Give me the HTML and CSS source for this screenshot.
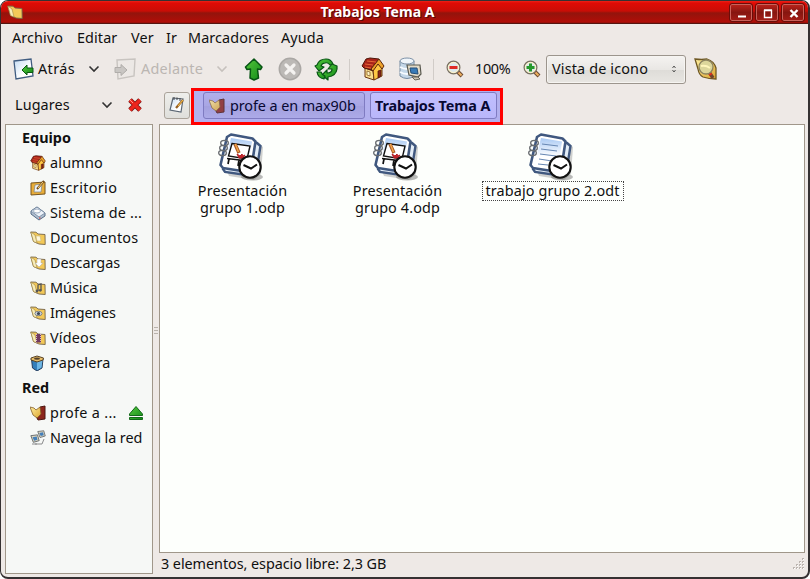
FILE: index.html
```html
<!DOCTYPE html>
<html lang="es">
<head>
<meta charset="utf-8">
<title>Trabajos Tema A</title>
<link rel="stylesheet" href="styles.css">
</head>
<body>
<svg class="defs" width="0" height="0">
  <defs>
    <linearGradient id="gold" x1="0" y1="0" x2="1" y2="1"><stop offset="0" stop-color="#fff0a0"/><stop offset="1" stop-color="#dda42e"/></linearGradient>
    <linearGradient id="green" x1="0" y1="0" x2="1" y2="1"><stop offset="0" stop-color="#55c83c"/><stop offset="1" stop-color="#118a18"/></linearGradient>
    <linearGradient id="paper" x1="0" y1="0" x2="1" y2="1"><stop offset="0" stop-color="#c3daf2"/><stop offset=".6" stop-color="#fff"/></linearGradient>
    <linearGradient id="sheet" x1="0" y1="0" x2="0" y2="1"><stop offset="0" stop-color="#a9c9f3"/><stop offset=".6" stop-color="#fff"/></linearGradient>
    <symbol id="folder" viewBox="0 0 16 16">
      <path d="M.8 2 6 2.2 8 4 15 4.5 15.2 14.5 9 14 3.5 11.5Z" fill="#f3c958" stroke="#756448" stroke-width=".9"/>
      <path d="M.8 2 3.5 11.5 7 13 5 5Z" fill="#f8edb8" stroke="#a08540" stroke-width=".6"/>
    </symbol>
    <symbol id="house" viewBox="0 0 24 24">
      <path d="M4 11 12 14 13 23 4 20Z" fill="#f7dc8c" stroke="#6b3512"/>
      <path d="M12 12 17 6 21 11 21 19 13 23Z" fill="#ffc744" stroke="#6b3512"/>
      <path d="M1 9 5 2 9 1 18 2 11 13 3 11Z" fill="#a92319" stroke="#4e1508"/>
      <path d="M18 2 23 9 21 12 17 7 12 14 10 12Z" fill="#eda22b" stroke="#5b260c"/>
      <path d="M4 7 12 8M6 4 15 5M4 10 10 11" stroke="#e56637"/>
      <path d="M17 14 20 13 20 19 17 21Z" fill="#8b251a" stroke="#481109" stroke-width=".7"/>
      <path d="M6 14 9 15V19L6 18Z" fill="#fff5c4" stroke="#81501b" stroke-width=".7"/>
    </symbol>
    <symbol id="chevron" viewBox="0 0 12 8"><path d="M1.5 1.5 6 6 10.5 1.5" fill="none" stroke="currentColor" stroke-width="1.6"/></symbol>
    <symbol id="lens" viewBox="0 0 18 18">
      <path d="M11 11 16 16" stroke="#6a4930" stroke-width="4"/><path d="M11 11 15.5 15.5" stroke="#efb261" stroke-width="2"/><path d="M11 11 12.5 12.5" stroke="#df3420" stroke-width="2"/>
      <circle cx="7.5" cy="7.5" r="6.4" fill="#e9e7d0" stroke="#776f60" stroke-width="1.2"/>
      <circle cx="7.5" cy="7.5" r="5" fill="#dce9ee" stroke="#fff4c8"/>
    </symbol>
    <symbol id="notebook" viewBox="0 0 48 48">
      <path d="M10 38 12 43 37 47 44 41 46 14 42 11Z" fill="#777" opacity=".35"/>
      <path d="M15 6 40 10 43.5 13 39 41 36 43 8 39 6 36Z" fill="#e3edf7" stroke="#40587f" stroke-width="2.4"/>
      <path d="M14 1.5 35.5 5.5 38.5 8.5 34 37 31 39 6 35 3.5 32 10 4Z" fill="#fff" stroke="#40587f" stroke-width="2.6" stroke-linejoin="round"/>
      <path d="M14 5 35 8.5 31 35.5 7.5 31.5Z" fill="url(#sheet)"/>
      <g fill="none" stroke="#686c70" stroke-width="1.4"><ellipse cx="7.5" cy="10" rx="3.8" ry="2.6"/><ellipse cx="6.5" cy="15" rx="3.8" ry="2.6"/><ellipse cx="5.5" cy="20" rx="3.8" ry="2.6"/></g>
    </symbol>
    <symbol id="clock" viewBox="0 0 48 48">
      <ellipse cx="35" cy="44" rx="11" ry="3.5" fill="#555" opacity=".4"/>
      <circle cx="33" cy="34" r="10.7" fill="#fff" stroke="#111" stroke-width="2.1"/>
      <path d="M26.5 32 34 35.5 40 31.5" fill="none" stroke="#111" stroke-width="2"/>
    </symbol>
    <symbol id="presentation" viewBox="0 0 48 48">
      <use href="#notebook"/>
      <path d="M10 25.5 31 28M12 26 11 31M22 27 21 33" stroke="#111" stroke-width="1.7"/>
      <path d="M15 10.5 33 13 30 26 11.5 23Z" fill="#fff" stroke="#111" stroke-width="1.4"/>
      <path d="M18 11 22 20" stroke="#a85824" stroke-width="3.4"/><path d="M18.3 11 21.5 19" stroke="#f2a64c" stroke-width="1.5"/>
      <path d="M20 21 23 23 25 21 26 23 28 22 26 25 22 25Z" fill="#c1272d" stroke="#b51c25"/>
      <use href="#clock"/>
    </symbol>
    <symbol id="remote" viewBox="0 0 16 16"><path d="M10 2 15 1V14L8 15 6 11 10 10Z" fill="#8d261c" stroke="#4c1711"/><path d="M0 2 4 3 6 5 10 2 11 9 7 13 3 10Z" fill="url(#gold)" stroke="#866028" stroke-width=".8"/></symbol>
    <symbol id="screen" viewBox="0 0 12 12"><path d="M1 2 9 1 11 8 4 10Z" fill="#ddd6bf" stroke="#545b60"/><path d="M3 4 8 3 9 7 5 8Z" fill="#437fba"/></symbol>
  </defs>
</svg>
<div class="window">
  <header class="titlebar">
    <svg class="app-icon" width="16" height="16"><use href="#folder"/></svg>
    <h1 class="title">Trabajos Tema A</h1>
    <div class="controls">
      <span class="control"><svg width="22" height="17"><path d="M7 11.5H15" stroke="#fff" stroke-width="2"/></svg></span>
      <span class="control"><svg width="22" height="17"><path d="M7.5 5.5H14.5V12.5H7.5ZM7 5H15" fill="none" stroke="#fff" stroke-width="1.4"/></svg></span>
      <span class="control"><svg width="22" height="17"><path d="M7.5 5 14.5 12M14.5 5 7.5 12" stroke="#fff" stroke-width="2.4"/></svg></span>
    </div>
  </header>
  <nav class="menu"><span>Archivo</span><span>Editar</span><span>Ver</span><span>Ir</span><span>Marcadores</span><span>Ayuda</span></nav>
  <div class="toolbar">
    <svg width="22" height="22" viewBox="0 0 22 22"><path d="M1 3 18 1 20 18 3 21Z" fill="url(#paper)" stroke="#405c80" stroke-width="1.3"/><path d="M9 12 14 7V10H20V14.5H14V17Z" fill="url(#green)" stroke="#0b5915"/></svg>
    <span class="back">Atrás</span>
    <svg class="arrow" width="12" height="8"><use href="#chevron"/></svg>
    <svg width="23" height="22" viewBox="0 0 23 22"><path d="M3 2 21 1 20 18 4 21Z" fill="#ece8e5" stroke="#c8c4c0" stroke-width="1.4"/><path d="M13 12 7 6.5V9.5H1V14.5H7V17.5Z" fill="#c9c6c3" stroke="#b0adaa"/></svg>
    <span class="forward">Adelante</span>
    <svg class="muted" width="12" height="8"><use href="#chevron"/></svg>
    <svg width="24" height="24"><path d="M12 2 20 10 18.5 12.5 15.5 12 16.5 21 12 23 8 21 8.5 12 5 12.5 3.5 10Z" fill="url(#green)" stroke="#075414" stroke-width="1.5" stroke-linejoin="round"/></svg>
    <svg width="24" height="24"><circle cx="12" cy="12" r="10.7" fill="#bcb9b6" stroke="#aaa7a4" stroke-width="1.5"/><path d="M8 8 16 16M16 8 8 16" stroke="#f4f2f0" stroke-width="3.2" stroke-linecap="round"/></svg>
    <svg width="24" height="24"><g fill="url(#green)" stroke="#075414" stroke-width="1.2" stroke-linejoin="round"><path d="M3 8Q5 2 12 2Q17 2 19 7L16 8Q14 5 11 6Q8 6 7 9L10 10 5 14 1 9Z"/><path d="M23 12Q22 19 14 20V23L8 18 13 13V16Q18 16 18 12L14 12 18 7 23 9Z"/><path d="M3 15H7Q8 18 11 19L10 22Q4 21 3 15Z"/></g></svg>
    <i class="separator"></i>
    <svg width="24" height="24"><use href="#house"/></svg>
    <svg width="24" height="24"><path d="M2 4V19Q9 24 16 19V4" fill="#c4d7e8" stroke="#7389a0"/><ellipse cx="9" cy="4" rx="7" ry="3" fill="#f0f5fa" stroke="#7d92a8"/><path d="M2 10Q9 14 16 10M2 15Q9 19 16 15" fill="none" stroke="#f7fbff" stroke-width="2"/><path d="M9 8 22 8 23 17 20 20 11 18Z" fill="#e2dac7" stroke="#58584f" stroke-width="1.2"/><path d="M12 11 19 11 20 17 13 16Z" fill="#397bb8" stroke="#254f78"/><path d="M14 20 20 20 22 22 17 23Z" fill="#cfc6b2" stroke="#68645a"/></svg>
    <i class="separator"></i>
    <svg width="18" height="18"><use href="#lens"/><path d="M3.5 7.5H11.5" stroke="#df2b24" stroke-width="3"/></svg>
    <span class="percent">100%</span>
    <svg width="18" height="18"><use href="#lens"/><path d="M3.5 7.5H11.5M7.5 3.5V11.5" stroke="#26982b" stroke-width="3"/></svg>
    <div class="combo"><span>Vista de icono</span><svg width="6" height="8"><path d="M1.5 3 3 1 4.5 3M1.5 5 3 7 4.5 5" fill="none" stroke="#555"/></svg></div>
    <svg width="24" height="24"><path d="M1 2Q8 3 13 2 20 4 22 11L22 22Q15 22 9 20 5 18 4 12Z" fill="url(#gold)" stroke="#6f5823" stroke-width="1.3"/><path d="M15 15 19 21" stroke="#71462d" stroke-width="3.5"/><path d="M15 15 17 18" stroke="#e82a1e" stroke-width="3"/><circle cx="12" cy="10" r="7" fill="#dcd69b" stroke="#8c8460" stroke-width="1.3"/><path d="M7 9Q12 8 16 11" fill="none" stroke="#fff6bc" stroke-width="2"/></svg>
  </div>
  <div class="location">
    <span class="places">Lugares</span>
    <svg class="places-arrow" width="12" height="8"><use href="#chevron"/></svg>
    <svg class="close" width="16" height="16"><path d="M3 3 13 13M13 3 3 13" stroke="#7d1714" stroke-width="5"/><path d="M3 3 13 13M13 3 3 13" stroke="#ed251d" stroke-width="3.2"/><path d="M3 3 6 6" stroke="#ff9489" stroke-width="1"/></svg>
    <span class="edit"><svg width="18" height="18"><path d="M5 2 15 3 13 16 2 14Z" fill="url(#paper)" stroke="#5b6774" stroke-width="1.2"/><path d="M6 1V4M9 1.5V4M12 2V5" stroke="#444"/><path d="M15 4 8 12" stroke="#966024" stroke-width="2.3"/><path d="M15 4 10 10" stroke="#ffc84c"/></svg></span>
    <div class="path">
      <span class="crumb"><svg width="16" height="16" opacity=".8"><use href="#remote"/></svg><span>profe a en max90b</span></span>
      <span class="crumb current">Trabajos Tema A</span>
    </div>
  </div>
  <div class="content">
    <aside class="sidebar">
      <h2>Equipo</h2>
      <div class="place"><svg width="16" height="16"><use href="#house"/></svg><span class="home">alumno</span></div>
      <div class="place"><svg width="16" height="16"><path d="M1 3 15 2V14L1 15Z" fill="#e8ad39" stroke="#765420"/><path d="M5 5 12 4 11 12 4 12Z" fill="#eef4f8" stroke="#7d8388" stroke-width=".7"/><path d="M14 1 7 9" stroke="#754d1d" stroke-width="2"/><path d="M13 2 8 8" stroke="#ffd979"/></svg><span class="desktop">Escritorio</span></div>
      <div class="place"><svg width="16" height="16"><path d="M1 6 7 2 15 8V11L9 15 1 9Z" fill="#b0bfd0" stroke="#576c87"/><path d="M1 6 7 2 15 8 9 12Z" fill="#edf3fa" stroke="#6c829b" stroke-width=".8"/><ellipse cx="7" cy="6" rx="3.5" ry="2" fill="#fff" stroke="#9bacc0"/><path d="M9 13H10.5" stroke="#de3327"/></svg><span class="system">Sistema de ...</span></div>
      <div class="place"><svg width="16" height="16"><use href="#folder"/><path d="M6 6 10 6 11 11 7 11Z" fill="#fff7db" stroke="#c8b982" stroke-width=".6"/></svg><span class="documents">Documentos</span></div>
      <div class="place"><svg width="16" height="16"><use href="#folder"/><path d="M7 4H11V8H13L9 12 5 8H7Z" fill="#fff" stroke="#aaa" stroke-width=".5"/></svg><span>Descargas</span></div>
      <div class="place"><svg width="16" height="16"><use href="#folder"/><path d="M8 11V5L11 4V10" fill="none" stroke="#555" stroke-width="1.3"/><circle cx="7" cy="11" r="1.4" fill="#555"/><circle cx="10.3" cy="10.3" r="1.4" fill="#555"/></svg><span>Música</span></div>
      <div class="place"><svg width="16" height="16"><use href="#folder"/><ellipse cx="8.5" cy="8.5" rx="3.6" ry="2.2" fill="#d7dce0" stroke="#68707a" stroke-width=".8"/><circle cx="8.5" cy="8.5" r="1.6" fill="#3b4755"/></svg><span class="images">Imágenes</span></div>
      <div class="place"><svg width="16" height="16"><use href="#folder"/><path d="M6 4H11V12.5H6Z" fill="#713b60"/><path d="M6.5 4V12.5M10.5 4V12.5" stroke="#d9b6cc" stroke-dasharray="1 1"/></svg><span class="videos">Vídeos</span></div>
      <div class="place"><svg width="16" height="16"><path d="M1.5 4 7 6 13 4 12 13 7 16 2.5 13Z" fill="#347fbb" stroke="#263e5e"/><path d="M7 6 12.5 4.5 11.5 12.5 7 15Z" fill="#6eb6e3"/><path d="M1 3 7 1 13.5 3 13 5 7 7 1 5Z" fill="#e7bd67" stroke="#584326"/><ellipse cx="7" cy="3.7" rx="3" ry="1.1" fill="#53412b"/></svg><span class="bin">Papelera</span></div>
      <h2>Red</h2>
      <div class="place"><svg width="16" height="16"><use href="#remote"/></svg><span class="mount">profe a ...</span><svg class="eject" width="16" height="16"><path d="M8 1.5 14.5 9V10.5H1.5V9ZM1.5 12.5H14.5V14.5H1.5Z" fill="url(#green)" stroke="#126819" stroke-linejoin="round"/></svg></div>
      <div class="place"><svg width="16" height="16"><use href="#screen" width="9" height="9" x="7" y="0"/><use href="#screen" width="10" height="10" x="0" y="4"/><path d="M5 14H12L14 9M2 14H7" fill="none" stroke="#8b8c8d"/></svg><span class="network">Navega la red</span></div>
    </aside>
    <div class="grip"><i></i><i></i><i></i></div>
    <section class="main">
      <div class="files">
        <div class="file"><svg width="48" height="48"><use href="#presentation"/></svg><p>Presentación<br><span>grupo 1.odp</span></p></div>
        <div class="file"><svg width="48" height="48"><use href="#presentation"/></svg><p>Presentación<br><span>grupo 4.odp</span></p></div>
        <div class="file"><svg width="48" height="48"><use href="#notebook"/><path d="M15 11 31 13M14 16 30 18M13 21 29 23M12 26 25 28M11 31 21 32" stroke="#6686b2"/><use href="#clock"/></svg><p class="focused">trabajo grupo 2.odt</p></div>
      </div>
      <footer class="status"><span>3 elementos, espacio libre: 2,3 GB</span><svg width="12" height="12"><path d="M9 1H11M6 4H8M9 4H11M3 7H5M6 7H8M9 7H11M0 10H2M3 10H5M6 10H8M9 10H11" stroke="#bbb4af" stroke-width="2"/><path d="M10 1.5H11M7 4.5H8M10 4.5H11M4 7.5H5M7 7.5H8M10 7.5H11M1 10.5H2M4 10.5H5M7 10.5H8M10 10.5H11" stroke="#fff"/></svg></footer>
    </section>
  </div>
</div>
</body>
</html>
```
FILE: styles.css
```css
* { box-sizing: border-box; }
body { margin: 0; width: 810px; height: 579px; overflow: hidden; background: #fff; font: 14.4px/18px "Noto Sans", sans-serif; color: #101010; }
svg { display: block; flex: none; }
.defs { position: absolute; }
.window { width: 810px; height: 579px; border: 1px solid #353132; border-width: 1px 2px 2px 1px; border-radius: 8px; overflow: hidden; background: #eee9e6; display: flex; flex-direction: column; }
.titlebar { height: 23px; flex: none; display: grid; grid-template-columns: 100px 1fr 156px; align-items: center; background: linear-gradient(#ef2116 0, #df0b05 2px, #c90d06 10px, #92140c 12px, #b20d07 21px, #841009 22px); border-bottom: 1px solid #541510; padding: 0 4px 0 6px; }
.title { margin: 0; color: #fff; text-align: center; font-size: 14px; line-height: 20px; letter-spacing: .05px; text-shadow: 1px 1px #5b0909; }
.controls { display: flex; gap: 4px; justify-content: flex-end; }
.control { width: 22px; height: 17px; border: 1px solid #c9625a; border-radius: 2px; background: linear-gradient(#b7221a, #861610 50%, #a21b14); outline: 1px solid #6b0d09; outline-offset: 0; display: grid; place-items: center; }
.menu { height: 28px; flex: none; padding-left: 11px; display: grid; grid-template-columns: 65px 54px 35px 22px 93px 50px; align-items: center; white-space: nowrap; letter-spacing: .1px; }
.toolbar { height: 34px; flex: none; padding-left: 12px; display: grid; grid-template-columns: 25px 50px 26px 27px 75px 26px 36px 36px 35px 12px 37px 35px 13px 29px 48px 23px 148px 24px; align-items: center; white-space: nowrap; }
.back { letter-spacing: .4px; }
.arrow, .places-arrow { color: #333; }
.forward { color: #bbb6b2; letter-spacing: .25px; }
.percent { letter-spacing: -.3px; }
.muted { color: #c6c1bd; }
.separator { width: 1px; height: 21px; background: #d1ccc8; }
.combo { width: 140px; height: 29px; border: 1px solid #9c958d; border-radius: 3px; padding: 0 8px 0 5px; display: flex; align-items: center; justify-content: space-between; background: linear-gradient(#f5f3f1, #e9e7e4 50%, #dedcd8 52%, #e8e6e2); box-shadow: inset 0 0 0 1px #f6f4f1; letter-spacing: .15px; }
.location { height: 38px; flex: none; display: flex; align-items: center; padding-left: 14px; }
.places { width: 86px; letter-spacing: .1px; }
.places-arrow { margin-right: 14px; }
.close { margin-right: 21px; }
.edit { width: 26px; height: 27px; border: 1px solid #aaa39a; border-radius: 3px; display: grid; place-items: center; background: linear-gradient(#eeeeeb, #dfdfdb); margin-right: 1px; }
.path { width: 312px; height: 37px; align-self: flex-start; position: relative; z-index: 1; top: 2px; border: 3px solid #f00; padding: 1px 3px 3px 9px; background: #b2b0ee; display: flex; gap: 5px; color: #080832; white-space: nowrap; }
.crumb { width: 162px; height: 27px; border: 1px solid #7f7bc1; border-radius: 3px; display: flex; align-items: center; gap: 5px; padding-left: 5px; background: linear-gradient(#b1afeb, #a9a6e4 50%, #a3a0de 52%, #acaae8); letter-spacing: -.08px; }
.current { width: 127px; background: linear-gradient(#c1bfff, #b9b6fa); font-weight: bold; letter-spacing: -.08px; padding-left: 4px; }
.content { flex: 1; min-height: 0; display: grid; grid-template-columns: 148px 6px 646px; padding-left: 4px; }
.sidebar { height: 450px; border: 1px solid #a0978a; background: #f6f8f6; }
.sidebar h2 { margin: 0; padding-left: 16px; font-size: 14.4px; line-height: 25px; height: 25px; }
.place { height: 25px; padding-left: 24px; display: flex; align-items: center; gap: 4px; white-space: nowrap; }
.home, .videos { letter-spacing: .2px; }
.desktop { letter-spacing: .35px; }
.system, .documents { letter-spacing: .2px; }
.images { letter-spacing: -.2px; }
.bin { letter-spacing: .15px; }
.network { letter-spacing: -.08px; }
.mount { width: 74px; letter-spacing: .3px; }
.grip { padding-top: 203px; display: flex; flex-direction: column; align-items: center; gap: 2px; }
.grip i { width: 4px; height: 1px; background: #b9b3ac; }
.files { height: 429px; border: 1px solid #a0978a; background: #fdfffc; display: grid; grid-template-columns: 155px 155px 155px; padding: 8px 0 0 5px; }
.file { display: flex; flex-direction: column; align-items: center; }
.file svg { margin-right: 3px; }
.file p { margin: 0; padding: 1px 2px; line-height: 17px; text-align: center; white-space: nowrap; letter-spacing: .12px; }
.file .focused { width: 142px; height: 20px; border: 1px dotted #444; padding: 0; }
.status { height: 22px; display: flex; align-items: center; justify-content: space-between; padding-left: 2px; white-space: nowrap; letter-spacing: -.06px; }
```
